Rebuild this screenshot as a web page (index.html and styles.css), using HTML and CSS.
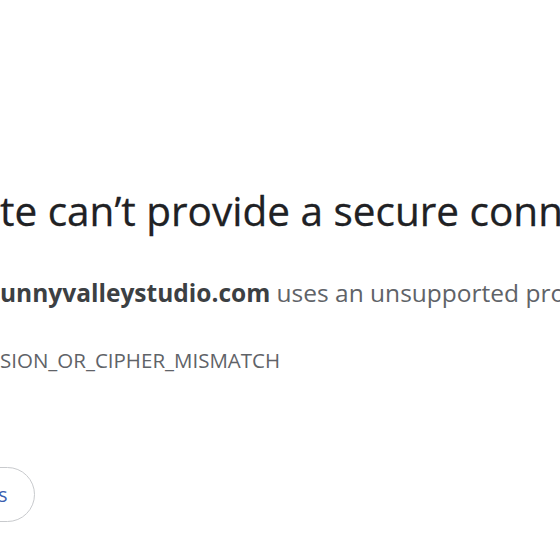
FILE: index.html
```html
<!DOCTYPE html>
<html lang="en">
<head>
    <meta charset="UTF-8">
    <meta name="viewport" content="width=device-width, initial-scale=1.0">
    <title>Privacy error</title>
    <link rel="stylesheet" href="styles.css">
</head>
<body>
    <div class="interstitial">
        <h1 class="heading"><span class="cut"><span>This si</span></span>te can’t provide a secure connection</h1>
        <p class="summary"><span class="cut"><span>www.s</span></span><strong>unnyvalleystudio.com</strong> uses an unsupported protocol.</p>
        <div class="error-code"><span class="cut"><span>ERR_SSL_VER</span></span>SION_OR_CIPHER_MISMATCH</div>
        <div class="nav-wrapper">
            <button class="details-button"><span class="cut"><span>Detail</span></span>s</button>
        </div>
    </div>
</body>
</html>
```

FILE: styles.css
```css
/* Page */
html, body {
    margin: 0;
    padding: 0;
    background: #fff;
}

body {
    width: 560px;
    height: 560px;
    overflow: hidden;
    font-family: 'Open Sans', 'Noto Sans', sans-serif;
    color: #5f6368;
}

.interstitial {
    padding-top: 187px;
    white-space: nowrap;
}

/* the left part of each line runs off the screen */
.cut {
    display: inline-block;
    width: 0;
    direction: rtl;
    vertical-align: baseline;
}

.cut span {
    direction: ltr;
    unicode-bidi: isolate;
}

.heading {
    margin: 0;
    font-size: 40.5px;
    line-height: 48px;
    font-weight: 500;
    color: #202124;
    -webkit-text-stroke: 0.3px #202124;
}

.summary {
    margin: 42px 0 0;
    font-size: 24.5px;
    line-height: 32px;
}

.summary strong {
    color: #3c4043;
    font-weight: 700;
}

.error-code {
    margin-top: 38px;
    font-size: 20.5px;
    line-height: 26px;
    color: #5f6368;
}

.nav-wrapper {
    margin-top: 94px;
}

.details-button {
    margin-left: -31px;
    height: 55px;
    padding: 0 26px 0 28px;
    border: 1px solid #c8cacd;
    border-radius: 28px;
    background: #fff;
    color: #3b5fb0;
    font-family: 'Open Sans', 'Noto Sans', sans-serif;
    font-size: 20px;
    white-space: nowrap;
}
```
